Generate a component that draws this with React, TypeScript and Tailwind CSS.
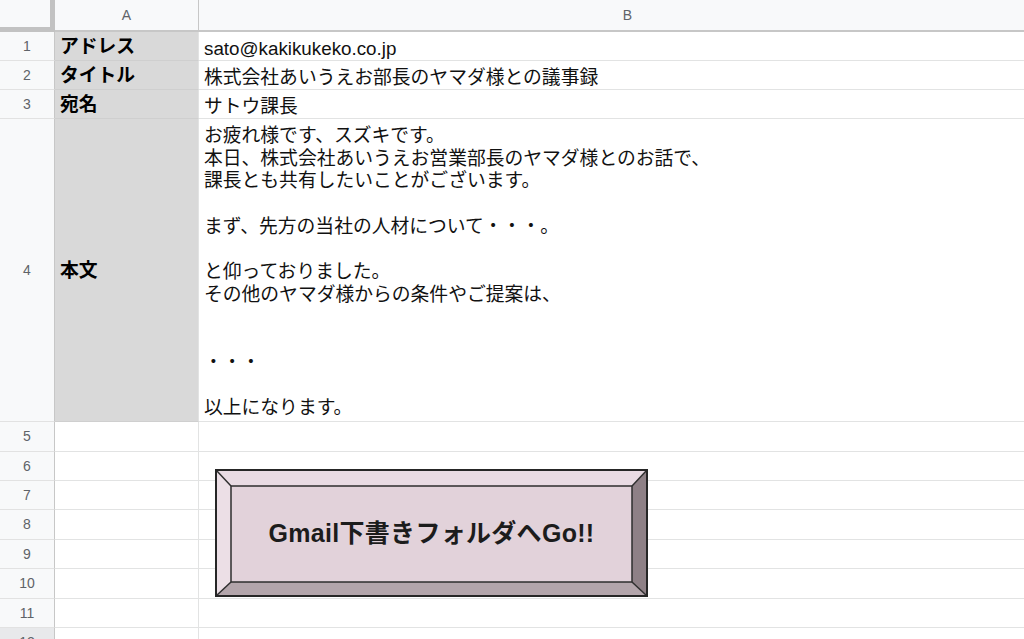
import React from 'react';

type Row = { n: number; h: number; a?: string; b?: string[]; top?: boolean };

const rows: Row[] = [
  { n: 1, h: 29, a: 'アドレス', b: ['sato@kakikukeko.co.jp'] },
  { n: 2, h: 29, a: 'タイトル', b: ['株式会社あいうえお部長のヤマダ様との議事録'] },
  { n: 3, h: 29, a: '宛名', b: ['サトウ課長'] },
  {
    n: 4,
    h: 303,
    a: '本文',
    top: true,
    b: [
      'お疲れ様です、スズキです。',
      '本日、株式会社あいうえお営業部長のヤマダ様とのお話で、',
      '課長とも共有したいことがございます。',
      '',
      'まず、先方の当社の人材について・・・。',
      '',
      'と仰っておりました。',
      'その他のヤマダ様からの条件やご提案は、',
      '',
      '',
      '・・・',
      '',
      '以上になります。',
    ],
  },
  { n: 5, h: 30 },
  { n: 6, h: 29 },
  { n: 7, h: 29 },
  { n: 8, h: 30 },
  { n: 9, h: 29 },
  { n: 10, h: 30 },
  { n: 11, h: 29 },
  { n: 12, h: 29 },
];

const BevelButton: React.FC<{ label: string }> = ({ label }) => (
  <div className="absolute left-[215px] top-[469px] w-[433px] h-[128px]">
    <svg className="absolute inset-0" width="433" height="128" viewBox="0 0 433 128">
      <polygon points="0,0 433,0 417,17 16,17" fill="#e9dbe3" />
      <polygon points="0,0 16,17 16,113 0,128" fill="#ecdfe6" />
      <polygon points="0,128 16,113 417,113 433,128" fill="#b3a5ab" />
      <polygon points="433,0 433,128 417,113 417,17" fill="#8e8086" />
      <rect x="16" y="17" width="401" height="96" fill="#e2d2da" stroke="#2e2e2e" strokeWidth="1.5" />
      <line x1="1" y1="1" x2="16" y2="17" stroke="#2e2e2e" strokeWidth="1.5" />
      <line x1="432" y1="1" x2="417" y2="17" stroke="#2e2e2e" strokeWidth="1.5" />
      <line x1="1" y1="127" x2="16" y2="113" stroke="#2e2e2e" strokeWidth="1.5" />
      <line x1="432" y1="127" x2="417" y2="113" stroke="#2e2e2e" strokeWidth="1.5" />
      <rect x="1" y="1" width="431" height="126" fill="none" stroke="#262626" strokeWidth="2" />
    </svg>
    <div className="absolute inset-0 flex items-center justify-center pt-[1px]">
      <span className="text-[25px] font-bold text-[#1c1c1c] tracking-[0.3px]">{label}</span>
    </div>
  </div>
);

export default function App() {
  return (
    <div className="relative w-[1024px] h-[639px] overflow-hidden bg-white font-['Liberation_Sans','Noto_Sans_CJK_JP',sans-serif] text-[#000]">
      {/* column headers */}
      <div className="flex h-[32px]">
        <div className="w-[55px] shrink-0 bg-[#f8f9fa] border-r-[5px] border-b-[5px] border-[#c2c2c2]" />
        <div className="w-[144px] shrink-0 bg-[#f8f9fa] border-r border-b-2 border-[#c7c7c7] flex items-center justify-center text-[14px] text-[#5f6368]">
          A
        </div>
        <div className="w-[857px] shrink-0 bg-[#f8f9fa] border-b-2 border-[#c7c7c7] flex items-center justify-center text-[14px] text-[#5f6368]">
          B
        </div>
      </div>

      {rows.map((r) => (
        <div key={r.n} className="flex" style={{ height: r.h }}>
          <div
            className={`w-[55px] shrink-0 border-r border-r-[#c7c7c7] border-b border-b-[#e2e2e2] flex items-center justify-center text-[14px] text-[#5f6368] ${
              r.n === 12 ? 'bg-[#e8e9eb]' : 'bg-[#f8f9fa]'
            }`}
          >
            {r.n}
          </div>
          <div
            className={`w-[144px] shrink-0 border-r border-b border-[#e2e3e3] flex items-center pl-[5px] pt-[3px] text-[18.8px] font-bold ${
              r.a ? 'bg-[#d9d9d9] border-b-[#cfcfcf]' : 'bg-white'
            }`}
          >
            {r.a}
          </div>
          <div
            className={`w-[857px] shrink-0 border-b border-[#e2e3e3] pl-[5px] text-[18.8px] text-[#111] ${
              r.top ? 'pt-[6px] leading-[22.67px]' : 'flex items-center pt-[1px]'
            }`}
          >
            {r.b && r.b.map((line, i) => <div key={i} className="whitespace-pre h-[22.67px]">{line}</div>)}
          </div>
        </div>
      ))}

      <BevelButton label="Gmail下書きフォルダへGo!!" />
    </div>
  );
}
